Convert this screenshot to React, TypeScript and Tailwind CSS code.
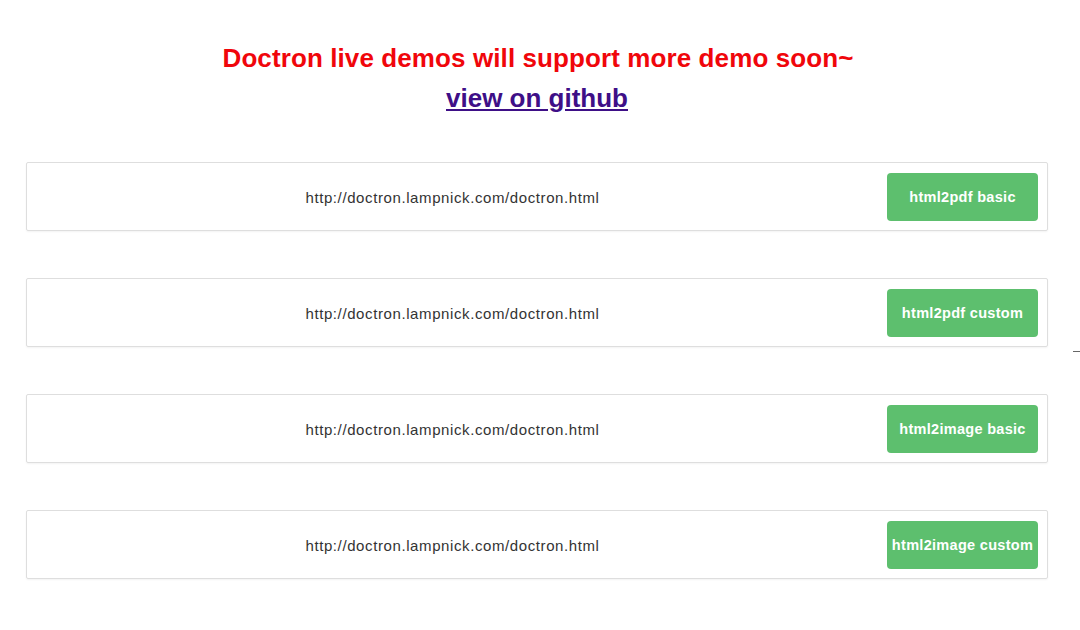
import React from "react";

const rows = [
  "html2pdf basic",
  "html2pdf custom",
  "html2image basic",
  "html2image custom",
];

export default function App() {
  return (
    <div
      className="relative w-[1080px] h-[630px] bg-white overflow-hidden"
      style={{ fontFamily: '"Liberation Sans", Arial, sans-serif' }}
    >
      <div className="pt-[40px] flex flex-col items-center">
        <h1 className="ml-[-4px] text-[26px] leading-[36px] font-bold text-[#f0060b] tracking-[0.1px]">
          Doctron live demos will support more demo soon~
        </h1>
        <a
          href="#"
          className="mt-[4px] mr-[6px] text-[26px] leading-[36px] font-bold text-[#3e0f87] underline"
        >
          view on github
        </a>
      </div>
      <div className="mt-[46px] ml-[26px] w-[1022px] flex flex-col gap-[47px]">
        {rows.map((r) => (
          <div
            key={r}
            className="flex items-center h-[69px] border border-[#dedede] rounded-[2px] shadow-[0_1px_2px_rgba(0,0,0,0.05)] pl-[1px] pr-[9px] gap-[10px]"
          >
            <div className="flex-1 text-center text-[15px] leading-[20px] pt-[3px] text-[#333333] tracking-[0.6px]">
              http://doctron.lampnick.com/doctron.html
            </div>
            <button className="w-[151px] h-[48px] rounded-[4px] bg-[#5dbf6e] text-white text-[14.5px] font-bold tracking-[0.3px] pt-[2px]">
              {r}
            </button>
          </div>
        ))}
      </div>
      <div className="absolute left-[1073px] top-[351px] w-[7px] h-[1px] bg-[#666]" />
    </div>
  );
}
